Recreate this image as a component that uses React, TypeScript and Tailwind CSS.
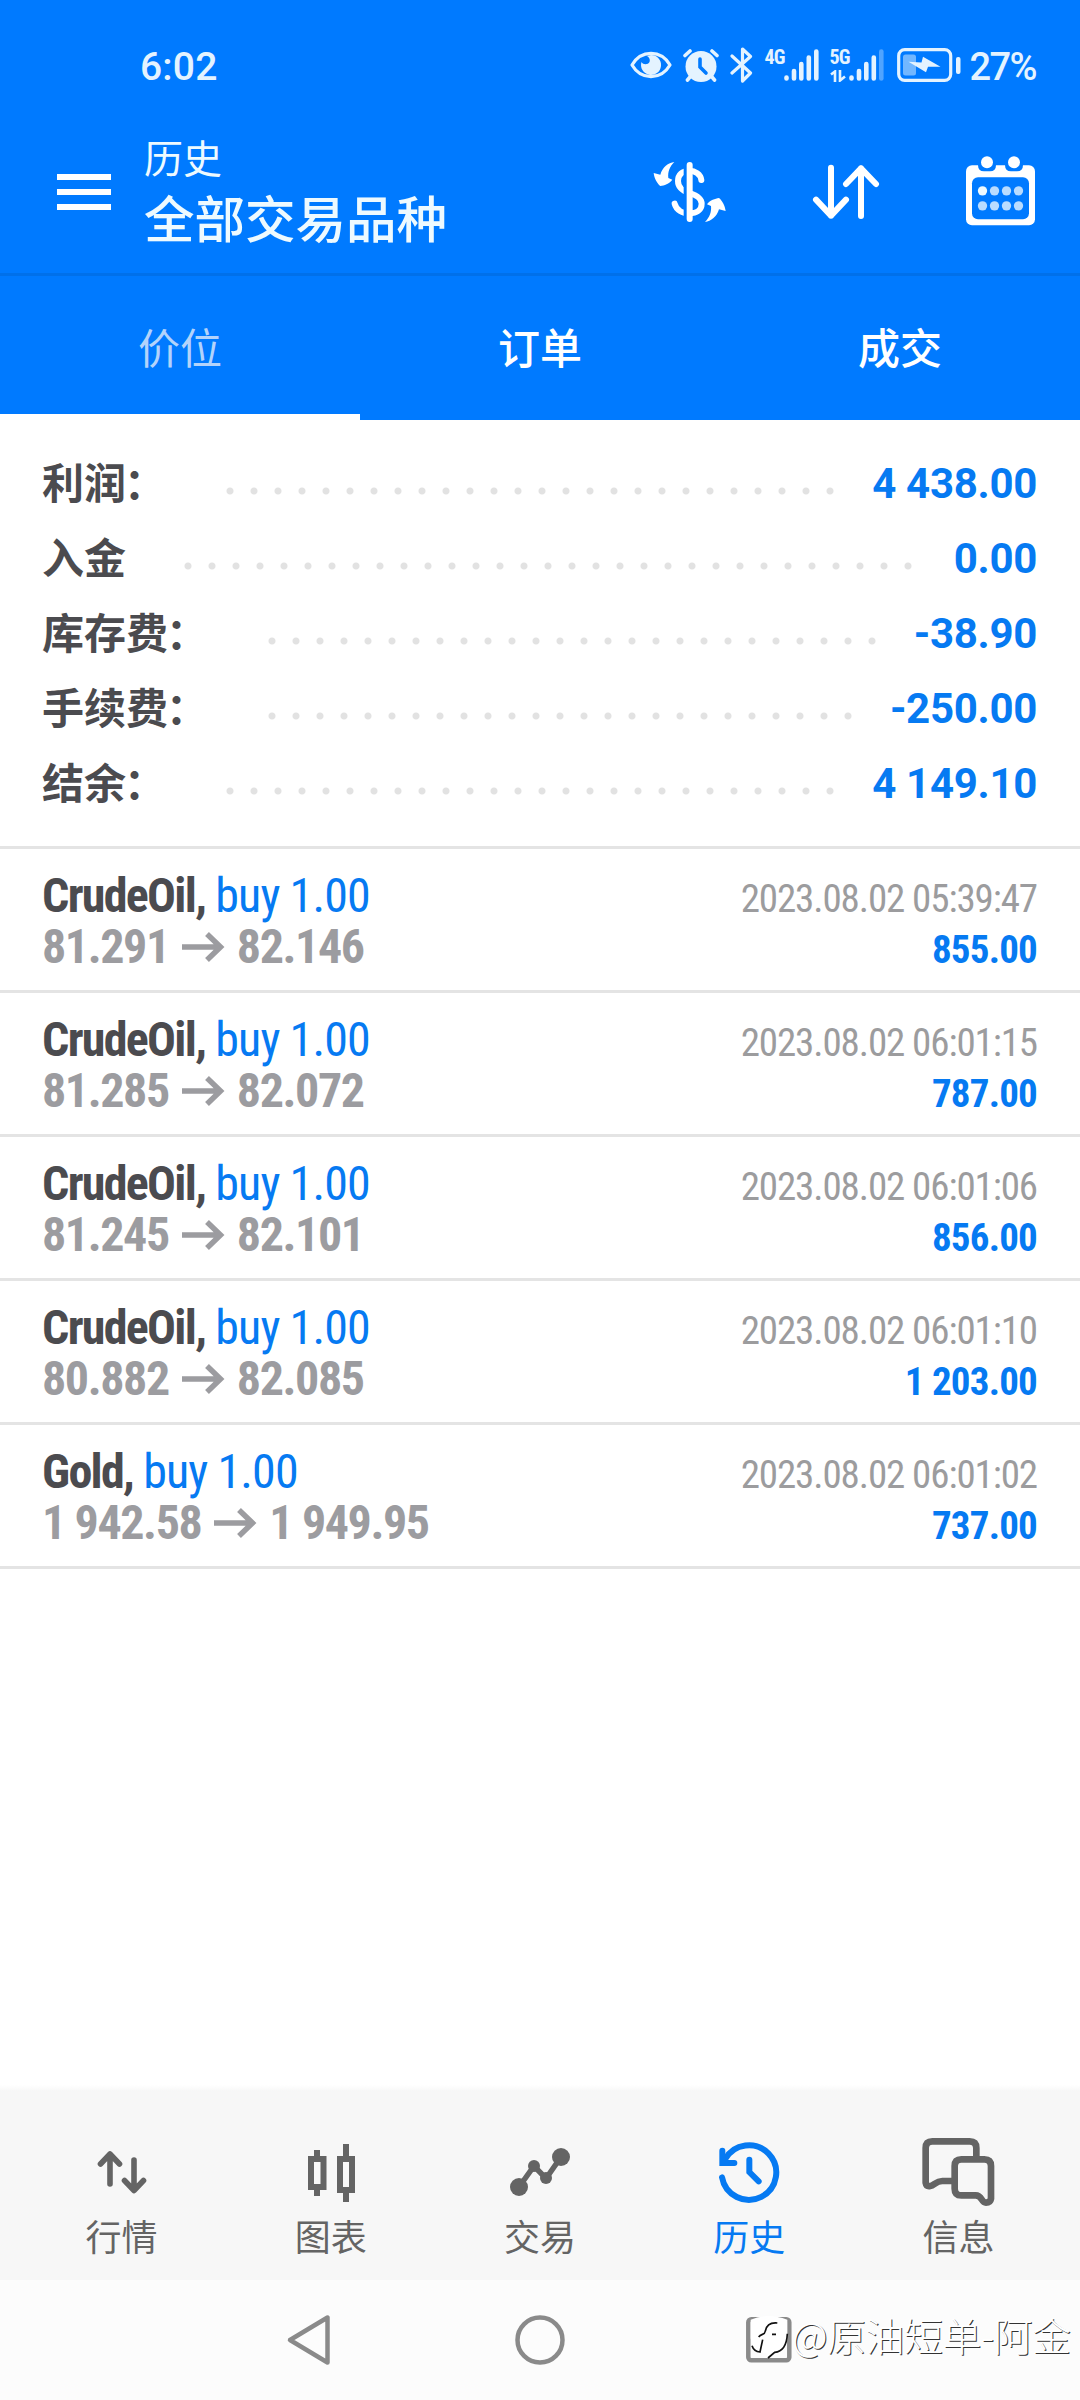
import React from "react";

const summary = [
  { label: "利润", colon: true, value: "4 438.00" },
  { label: "入金", colon: false, value: "0.00" },
  { label: "库存费", colon: true, value: "-38.90" },
  { label: "手续费", colon: true, value: "-250.00" },
  { label: "结余", colon: true, value: "4 149.10" },
];

const deals = [
  { symbol: "CrudeOil,", side: "buy 1.00", from: "81.291", to: "82.146", time: "2023.08.02 05:39:47", profit: "855.00" },
  { symbol: "CrudeOil,", side: "buy 1.00", from: "81.285", to: "82.072", time: "2023.08.02 06:01:15", profit: "787.00" },
  { symbol: "CrudeOil,", side: "buy 1.00", from: "81.245", to: "82.101", time: "2023.08.02 06:01:06", profit: "856.00" },
  { symbol: "CrudeOil,", side: "buy 1.00", from: "80.882", to: "82.085", time: "2023.08.02 06:01:10", profit: "1 203.00" },
  { symbol: "Gold,", side: "buy 1.00", from: "1 942.58", to: "1 949.95", time: "2023.08.02 06:01:02", profit: "737.00" },
];

function StatusBar() {
  return (
    <div className="flex h-[111px] items-center pt-[19px] pr-[44px] pl-[140px] text-[#e4f3ff]">
      <span className="mt-[4px] text-[39px] leading-none font-medium tracking-[0.2px]">6:02</span>

      <div className="ml-auto flex items-center">
        {/* Eye comfort */}
        <svg width="42" height="28" viewBox="0 0 42 28" fill="none">
          <path d="M2 14C11 -1.500 31 -1.500 40 14C31 29.500 11 29.500 2 14Z" stroke="currentColor" strokeWidth="3.200" strokeLinejoin="round" />
          <path d="M21 4A10 10 0 1 1 11.500 11C13 14 18 14 19.500 11C20.500 8.500 19 6 17 5Z" fill="currentColor" />
        </svg>
        {/* Alarm */}
        <svg className="ml-[11px]" width="36" height="35" viewBox="0 0 36 35" fill="none">
          <circle cx="18" cy="18.500" r="15.500" fill="currentColor" />
          <path d="M2 7.500L7 3M34 7.500L29 3M7 29L4.500 32M29 29L31.500 32" stroke="currentColor" strokeWidth="3.600" strokeLinecap="round" />
          <path d="M17 11V19L23 25" stroke="#007aff" strokeWidth="3.600" strokeLinecap="round" />
        </svg>
        {/* Bluetooth */}
        <svg className="ml-[11px]" width="24" height="38" viewBox="0 0 24 38" fill="none">
          <path d="M2 10L20.500 27L12.500 35V3L20.500 10.500L2 27" stroke="currentColor" strokeWidth="3.200" strokeLinejoin="round" strokeLinecap="round" />
        </svg>
        {/* SIM 1 */}
        <div className="ml-[11px] flex h-[35px] items-start">
          <span className="mt-[1px] w-[18px] text-[20px] leading-[16px] font-bold tracking-[-1px] [font-stretch:75%]">4G</span>
          <svg width="37" height="35" viewBox="0 0 37 35" fill="none" stroke="currentColor" strokeWidth="4.600" strokeLinecap="round">
            <path d="M3.500 29.500V30.500M11 23V30.500M18.300 16V30.500M25.800 9.500V30.500M33.300 3.500V30.500" />
          </svg>
        </div>
        {/* SIM 2 */}
        <div className="ml-[10px] flex h-[35px] items-start">
          <div className="mt-[1px] w-[18px]">
            <div className="text-[20px] leading-[16px] font-bold tracking-[-1px] [font-stretch:75%]">5G</div>
            <svg className="mt-[5px]" width="16" height="12" viewBox="0 0 16 12" fill="none" stroke="currentColor" strokeWidth="2.600">
              <path d="M1 4.500L5 1.500V12M10 0V10.500L15 6.500" />
            </svg>
          </div>
          <svg width="37" height="35" viewBox="0 0 37 35" fill="none" stroke="currentColor" strokeWidth="4.600" strokeLinecap="round">
            <path d="M3.500 29.500V30.500M11 23V30.500M18.300 16V30.500M25.800 9.500V30.500" />
            <path d="M33.300 3.500V30.500" opacity="0.35" />
          </svg>
        </div>
        {/* Battery */}
        <svg className="ml-[12px]" width="64" height="34" viewBox="0 0 64 34" fill="none">
          <rect x="1.700" y="1.700" width="52" height="30.600" rx="6" stroke="currentColor" strokeWidth="3.200" />
          <rect x="6" y="6.500" width="13" height="21" rx="2.500" fill="currentColor" opacity="0.5" />
          <path d="M11.500 13.700L24.500 14.500L26 8.700L43.500 18.700H31L29 24.300Z" fill="currentColor" />
          <rect x="59" y="9" width="4.500" height="17" rx="2" fill="currentColor" />
        </svg>
        <span className="mt-[4px] ml-[9px] text-[38px] leading-none font-medium tracking-[-1.6px]">27%</span>
      </div>
    </div>
  );
}

function AppBar() {
  return (
    <div className="flex h-[162px] items-center pr-[45px] pl-[57px]">
      <button className="flex w-[54px] flex-col gap-[9px]">
        <span className="h-[6px] bg-white"></span>
        <span className="h-[6px] bg-white"></span>
        <span className="h-[6px] bg-white"></span>
      </button>
      <div className="-mt-[2px] ml-[33px] text-[#eefaff]">
        <div className="text-[39px] leading-[59px]">历史</div>
        <h1 className="text-[50.5px] leading-[61px] font-medium">全部交易品种</h1>
      </div>

      <svg className="ml-auto" width="74" height="62" viewBox="100 93 222 186" fill="none">
        <path d="M245 150C243 132 225 122 210 122C188 122 175 135 175 153C175 175 190 183 210 189C232 196 246 204 246 221C246 240 230 250 210 250C188 250 170 240 165 221" stroke="white" strokeWidth="18" strokeLinecap="round" />
        <path d="M192 96H202V276H192Z" fill="#007aff" />
        <rect x="201" y="96" width="18" height="180" rx="9" fill="white" />
        <path d="M164 96C146 98 128 112 122 134L102 129C104 145 112 160 122 168C134 166 148 162 158 149L146 144C144 126 150 110 164 96Z" fill="white" />
        <path d="M256 276C274 274 292 260 298 238L318 243C316 227 308 212 298 204C286 206 272 210 262 223L274 228C276 246 270 262 256 276Z" fill="white" />
      </svg>
      <svg className="ml-[85px]" width="68" height="56" viewBox="576 102 204 168" fill="none" stroke="white" strokeWidth="18" strokeLinecap="round" strokeLinejoin="round">
        <path d="M633 113V257M588 209L633 257L678 209" />
        <path d="M723 258V115M678 162L723 115L768 162" />
      </svg>
      <svg className="mb-[3px] ml-[86px]" width="69" height="70" viewBox="1038 77 207 210" fill="none">
        <rect x="1038" y="105" width="207" height="180" rx="18" fill="white" />
        <path d="M1074 96H1128V104Q1128 123 1110 123H1092Q1074 123 1074 104ZM1155 96H1209V104Q1209 123 1191 123H1173Q1155 123 1155 104Z" fill="#007aff" />
        <rect x="1056" y="141" width="171" height="126" rx="18" fill="#007aff" />
        <circle cx="1101" cy="96" r="18" fill="white" />
        <circle cx="1182" cy="96" r="18" fill="white" />
        <circle cx="1087.500" cy="181.500" r="14" fill="#eefaff" />
        <g fill="#b9dcff">
          <circle cx="1123.500" cy="181.500" r="14" />
          <circle cx="1159.500" cy="181.500" r="14" />
          <circle cx="1195.500" cy="181.500" r="14" />
          <circle cx="1087.500" cy="226.500" r="14" />
          <circle cx="1123.500" cy="226.500" r="14" />
          <circle cx="1159.500" cy="226.500" r="14" />
          <circle cx="1195.500" cy="226.500" r="14" />
        </g>
      </svg>
    </div>
  );
}

function Tabs() {
  return (
    <div className="grid h-[147px] grid-cols-3 border-t-[3px] border-[#0070ea] text-center text-[42px]">
      <div className="flex items-center justify-center border-b-[6px] border-white pt-[9px] text-[#b3d3fb]">价位</div>
      <div className="flex items-center justify-center pt-[3px] font-medium text-white">订单</div>
      <div className="flex items-center justify-center pt-[3px] font-medium text-white">成交</div>
    </div>
  );
}

function Summary() {
  return (
    <div className="border-b-[3px] border-[#e4e4e4] px-[42px] pt-[26px] pb-[25px]">
      {summary.map((row) => (
        <div key={row.label} className="flex h-[75px] items-center text-[42px] leading-[75px] font-bold">
          <span className="mt-[2px] text-[#4b4b4f]">
            {row.label}
            {row.colon && <span className="mr-[2px] -ml-[2px]">：</span>}
          </span>
          <span className="mt-[14px] mr-[28px] ml-[50px] h-[24px] flex-1 bg-[radial-gradient(circle,#e2e2e2_3px,transparent_4px)] bg-[length:24px_24px]"></span>
          <span className="mr-px tracking-[-0.3px] text-[#067af2]">{row.value}</span>
        </div>
      ))}
    </div>
  );
}

function DealRow({ deal }: { deal: (typeof deals)[number] }) {
  return (
    <div className="flex h-[144px] justify-between border-b-[3px] border-[#e4e4e4] pt-[21px] pr-[43px] pl-[42px] [font-stretch:75%]">
      <div className="text-[48px] leading-[51px]">
        <div className="tracking-[-0.9px]">
          <span className="font-bold tracking-[-1.7px] text-[#4b4b4f]">{deal.symbol}</span>{" "}
          <span className="text-[#067af2]">{deal.side}</span>
        </div>
        <div className="flex items-center font-bold tracking-[-1.4px] text-[#9c9ca0]">
          <span>{deal.from}</span>
          <svg className="mr-[12px] ml-[13px]" width="43" height="30" viewBox="0 0 43 30" fill="none" stroke="currentColor" strokeWidth="5.500">
            <path d="M0 15H38M25 2L38.500 15L25 28" />
          </svg>
          <span>{deal.to}</span>
        </div>
      </div>
      <div className="pt-[4px] text-right text-[39px] leading-[51px]">
        <div className="tracking-[-1.1px] text-[#9c9c9e]">{deal.time}</div>
        <div className="font-bold tracking-[-0.8px] text-[#067af2]">{deal.profit}</div>
      </div>
    </div>
  );
}

function BottomNav() {
  return (
    <nav className="grid h-[189px] grid-cols-5 bg-[#f7f7f7] px-[17px] pt-[45px] text-center text-[36px] leading-[62px] text-[#646464]">
      <div className="flex flex-col items-center">
        <svg width="84" height="72" viewBox="80 2136 84 72" fill="none" stroke="currentColor" strokeWidth="5.600" strokeLinecap="round" strokeLinejoin="round">
          <path d="M110 2184V2154M100.500 2164L110 2154L119.500 2164" />
          <path d="M134 2160V2190M124.500 2180.500L134 2190.500L143.500 2180.500" />
        </svg>
        <span>行情</span>
      </div>
      <div className="flex flex-col items-center">
        <svg width="84" height="72" viewBox="289 2136 84 72" fill="none" stroke="currentColor" strokeWidth="6">
          <path d="M311 2159H323.500V2187H311ZM317 2150V2157M317 2189V2196" />
          <path d="M340 2159H352V2190H340ZM346 2144V2157M346 2192V2202" />
        </svg>
        <span>图表</span>
      </div>
      <div className="flex flex-col items-center">
        <svg width="84" height="72" viewBox="498 2136 84 72" fill="currentColor">
          <path d="M519 2187L534 2166L546 2178.500L561 2157" fill="none" stroke="currentColor" strokeWidth="5.500" />
          <circle cx="519" cy="2187" r="9" />
          <circle cx="561" cy="2157" r="9" />
          <circle cx="534" cy="2166" r="6" />
          <circle cx="546" cy="2178" r="6" />
        </svg>
        <span>交易</span>
      </div>
      <div className="flex flex-col items-center text-[#067af2]">
        <svg width="84" height="72" viewBox="440 198 252 216" fill="none" stroke="currentColor" strokeWidth="18" strokeLinecap="round">
          <path d="M485 322A82 82 0 1 0 494 268" />
          <path d="M486 242V279H522" />
          <path d="M567 269V306L595 334" />
        </svg>
        <span>历史</span>
      </div>
      <div className="flex flex-col items-center">
        <svg width="84" height="72" viewBox="1067 198 252 216" fill="none" stroke="currentColor" strokeWidth="20">
          <path d="M1248 262V234Q1248 214 1228 214H1116Q1096 214 1096 234V338Q1098 350 1110 348C1122 347 1126 333 1146 333H1176" />
          <path d="M1203 268H1272Q1292 268 1292 288V386Q1290 398 1277 398C1262 398 1266 376 1246 376H1203Q1183 376 1183 356V288Q1183 268 1203 268Z" />
        </svg>
        <span>信息</span>
      </div>
    </nav>
  );
}

function SystemNav() {
  return (
    <div className="relative h-[120px] bg-[#fcfcfc]">
      <div className="flex h-full items-center pl-[286px] text-[#8a8a8a]">
        <svg width="46" height="52" viewBox="0 0 46 52" fill="none" stroke="currentColor" strokeWidth="4.500" strokeLinejoin="round">
          <path d="M41.500 3.500V48.500L4 26Z" />
        </svg>
        <svg className="ml-[182px]" width="52" height="52" viewBox="0 0 52 52" fill="none" stroke="currentColor" strokeWidth="4.500">
          <circle cx="26" cy="26" r="22.500" />
        </svg>
        <svg className="ml-[180px]" width="46" height="46" viewBox="0 0 46 46" fill="none" stroke="currentColor" strokeWidth="4.500">
          <rect x="2.300" y="2.300" width="41" height="41" rx="3" />
        </svg>
      </div>

      {/* Author tag laid over the system buttons */}
      <div className="absolute top-[33px] left-[748px] flex items-center text-[39px] leading-[50px] whitespace-nowrap text-white">
        <svg width="44" height="46" viewBox="564 744 132 138" fill="none">
          <path d="M572 764Q622 742 682 764V820Q680 862 644 864L624 880L618 864Q578 862 572 820Z" fill="white" />
          <path d="M682 806C680 848 664 860 644 862L624 879M576 842C580 854 588 860 600 861L608 824M596 816C604 804 614 812 616 798C620 778 632 772 652 774M636 808H648" stroke="#111" strokeWidth="5" />
        </svg>
        <span className="-mt-[5px] font-['Noto_Sans_CJK_SC',sans-serif] font-light tracking-[-0.5px] [text-shadow:1px_1px_0_#333]">@原油短单-阿金</span>
      </div>
    </div>
  );
}

export default function App() {
  return (
    <div className="flex h-[2400px] w-[1080px] flex-col overflow-hidden bg-white font-['Roboto','Noto_Sans_CJK_SC',sans-serif]">
      <header className="bg-[#007aff]">
        <StatusBar />
        <AppBar />
        <Tabs />
      </header>

      <main className="flex-1">
        <Summary />
        {deals.map((deal) => (
          <DealRow key={deal.time} deal={deal} />
        ))}
      </main>

      <div className="h-[6px] bg-gradient-to-b from-white to-[#f7f7f7]"></div>
      <BottomNav />
      <SystemNav />
    </div>
  );
}
